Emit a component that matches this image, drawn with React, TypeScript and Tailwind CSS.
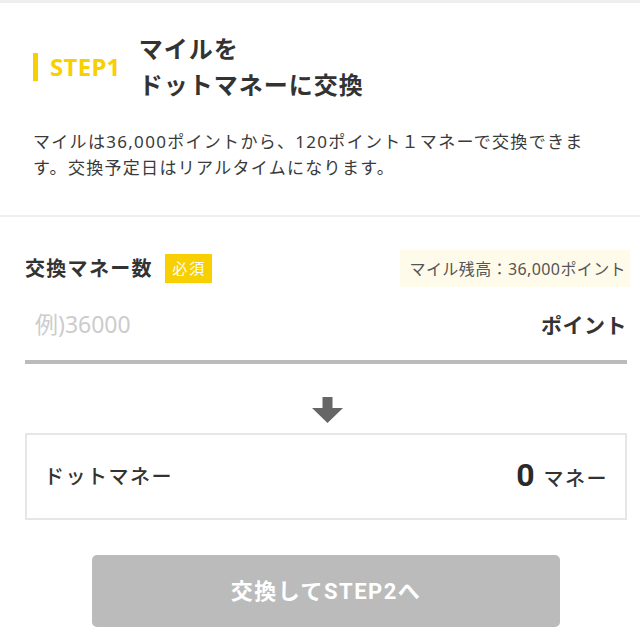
import React from "react";

// Step 1 of the mile → dot money exchange flow.

const FONT = { fontFamily: '"Noto Sans", "Noto Sans CJK JP", sans-serif' };
const NUM_FONT = { fontFamily: 'Roboto, "Noto Sans CJK JP", sans-serif' };

function DownArrow() {
  return (
    <svg width="31" height="26" viewBox="0 0 31 26" aria-hidden="true">
      <path d="M10.5 0h10v11H31L15.5 26 0 11h10.5z" fill="#666666" />
    </svg>
  );
}

export default function App() {
  return (
    <div className="h-[641px] w-[640px] overflow-hidden bg-white text-[#333]" style={FONT}>
      <div className="h-[3px] bg-[#eeeeee]" />

      {/* heading */}
      <section className="pl-[33px] pt-[28px] pb-[34px]">
        <div className="flex items-center">
          <span className="h-[28px] w-[5px] bg-[#f8cf00]" />
          <span className="ml-[12px] text-[24px] font-bold leading-none tracking-[0.3px] text-[#f8cf00]">STEP1</span>
          <h1 className="ml-[18px] text-[24px] leading-[36px] font-bold tracking-[1px] text-[#333]">
            マイルを
            <br />
            ドットマネーに交換
          </h1>
        </div>
        <p className="mt-[26px] w-[562px] text-[17px] leading-[26px] tracking-[1.3px] text-[#3a3a3a]">
          マイルは36,000ポイントから、120ポイント１マネーで交換できます。交換予定日はリアルタイムになります。
        </p>
      </section>

      <div className="h-[2px] bg-[#eeeeee]" />

      {/* form */}
      <section className="pl-[25px] pr-[13px] pt-[33px]">
        <div className="flex h-[37px] items-center justify-between">
          <div className="flex items-center">
            <span className="text-[20px] font-bold tracking-[1.3px]">交換マネー数</span>
            <span className="ml-[12px] flex h-[29px] w-[47px] items-center justify-center bg-[#f8cf00] pl-[2px] text-[15px] tracking-[2px] text-white">
              必須
            </span>
          </div>
          <div className="-mr-[3px] flex h-[37px] w-[230px] items-center justify-end bg-[#fffbea] pr-[4px] text-[16px] tracking-[0.4px] text-[#555]">
            マイル残高：36,000ポイント
          </div>
        </div>

        <div className="flex h-[77px] items-center justify-between border-b-4 border-[#bbbbbb] pt-[1px]">
          <input
            type="text"
            placeholder="例)36000"
            className="ml-[10px] w-[300px] bg-transparent text-[23px] leading-[32px] text-[#333] outline-none placeholder:text-[#cccccc]"
          />
          <span className="mt-[4px] text-[21px] font-bold tracking-[0.5px]">ポイント</span>
        </div>

        <div className="flex justify-center pt-[33px] pb-[10px] pl-[3px]">
          <DownArrow />
        </div>

        <div className="flex h-[87px] items-center justify-between border-2 border-[#e6e6e6] px-[17px]">
          <span className="text-[20px] font-medium tracking-[1.5px] text-[#333]">ドットマネー</span>
          <span className="flex items-baseline">
            <span className="text-[32px] font-bold leading-none text-[#2a2a2a]" style={NUM_FONT}>
              0
            </span>
            <span className="ml-[9px] text-[20px] font-medium tracking-[1.5px]">マネー</span>
          </span>
        </div>

        <div className="flex justify-center pt-[35px]">
          <button
            type="button"
            disabled
            className="h-[72px] w-[468px] rounded-[5px] bg-[#bbbbbb] text-[22px] font-bold tracking-[1.5px] text-white"
          >
            交換して<span style={NUM_FONT}>STEP2</span>へ
          </button>
        </div>
      </section>
    </div>
  );
}
